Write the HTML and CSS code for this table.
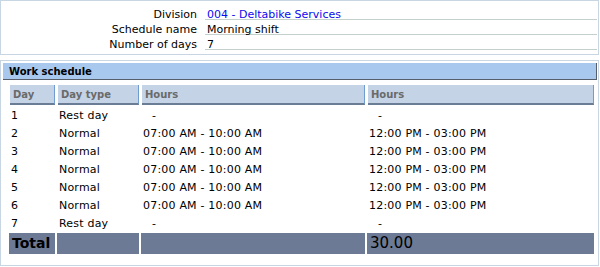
FILE: index.html
```html
<!DOCTYPE html>
<html>
<head>
<meta charset="utf-8">
<link rel="stylesheet" href="styles.css">
</head>
<body>
<div class="panel info">
  <div class="info-grid">
    <div class="lbl">Division</div><div class="val"><a class="link">004 - Deltabike Services</a></div>
    <div class="lbl">Schedule name</div><div class="val">Morning shift</div>
    <div class="lbl">Number of days</div><div class="val">7</div>
  </div>
</div>
<div class="panel sched">
  <div class="bar">Work schedule</div>
  <table class="grid">
    <colgroup><col class="w1"><col class="w2"><col class="w3"><col class="w4"></colgroup>
    <thead>
      <tr><th><div class="hd">Day</div></th><th><div class="hd">Day type</div></th><th><div class="hd">Hours</div></th><th><div class="hd">Hours</div></th></tr>
    </thead>
    <tbody>
      <tr><td>1</td><td>Rest day</td><td class="dash">-</td><td class="dash">-</td></tr>
      <tr><td>2</td><td>Normal</td><td>07:00 AM - 10:00 AM</td><td>12:00 PM - 03:00 PM</td></tr>
      <tr><td>3</td><td>Normal</td><td>07:00 AM - 10:00 AM</td><td>12:00 PM - 03:00 PM</td></tr>
      <tr><td>4</td><td>Normal</td><td>07:00 AM - 10:00 AM</td><td>12:00 PM - 03:00 PM</td></tr>
      <tr><td>5</td><td>Normal</td><td>07:00 AM - 10:00 AM</td><td>12:00 PM - 03:00 PM</td></tr>
      <tr><td>6</td><td>Normal</td><td>07:00 AM - 10:00 AM</td><td>12:00 PM - 03:00 PM</td></tr>
      <tr><td>7</td><td>Rest day</td><td class="dash">-</td><td class="dash">-</td></tr>
    </tbody>
    <tfoot>
      <tr><td class="tot">Total</td><td></td><td></td><td class="sum">30.00</td></tr>
    </tfoot>
  </table>
</div>
</body>
</html>
```
FILE: styles.css
```css
html, body {
  margin: 0;
  padding: 0;
  background: #ffffff;
  font-family: "DejaVu Sans", Verdana, sans-serif;
  font-size: 11px;
  color: #000;
}
.panel {
  border: 1px solid #c8d6e4;
  width: 597px;
}
.info {
  height: 53px;
}
.info-grid {
  display: grid;
  grid-template-columns: 196px 392px;
  column-gap: 8px;
  padding-top: 4px;
}
.lbl, .val {
  height: 14px;
  line-height: 19px;
  white-space: nowrap;
}
.lbl {
  text-align: right;
}
.val {
  border-bottom: 1px solid #c4d0cc;
  padding-left: 2px;
}
.link {
  color: #0a0af0;
}
.sched {
  margin-top: 5px;
  height: 204px;
}
.bar {
  margin: 2px 1px 0 2px;
  height: 16px;
  background: #a8c8ee;
  border-right: 1px solid #555e6a;
  border-bottom: 1px solid #555e6a;
  font-weight: bold;
  font-size: 10px;
  line-height: 18px;
  padding-left: 6px;
}
.grid {
  border-collapse: separate;
  border-spacing: 2px 0;
  margin: 5px 0 0 6px;
  table-layout: fixed;
  width: 589px;
}
.w1 { width: 46px; }
.w2 { width: 82px; }
.w3 { width: 224px; }
.w4 { width: 227px; }
.grid th {
  padding: 0;
}
.hd {
  margin: 0 0 0 1px;
  background: #c4d3e5;
  color: #6a6a6a;
  text-align: left;
  font-weight: bold;
  font-size: 10px;
  height: 18px;
  padding-left: 3px;
  border-right: 1px solid #6f9dd2;
  border-bottom: 2px solid #6b7c95;
  line-height: 19px;
}
.grid tbody td {
  height: 18px;
  padding: 0 0 0 2px;
  line-height: 18px;
  letter-spacing: 0.2px;
  white-space: nowrap;
}
.grid tbody tr:first-child td {
  padding-top: 2px;
}
.grid td.dash {
  padding-left: 11px;
}
.grid tfoot td {
  background: #6c7a96;
  height: 20px;
  font-size: 15px;
  padding: 0 0 0 3px;
  line-height: 21px;
}
.grid td.tot {
  font-weight: bold;
  font-size: 14px;
}
```
